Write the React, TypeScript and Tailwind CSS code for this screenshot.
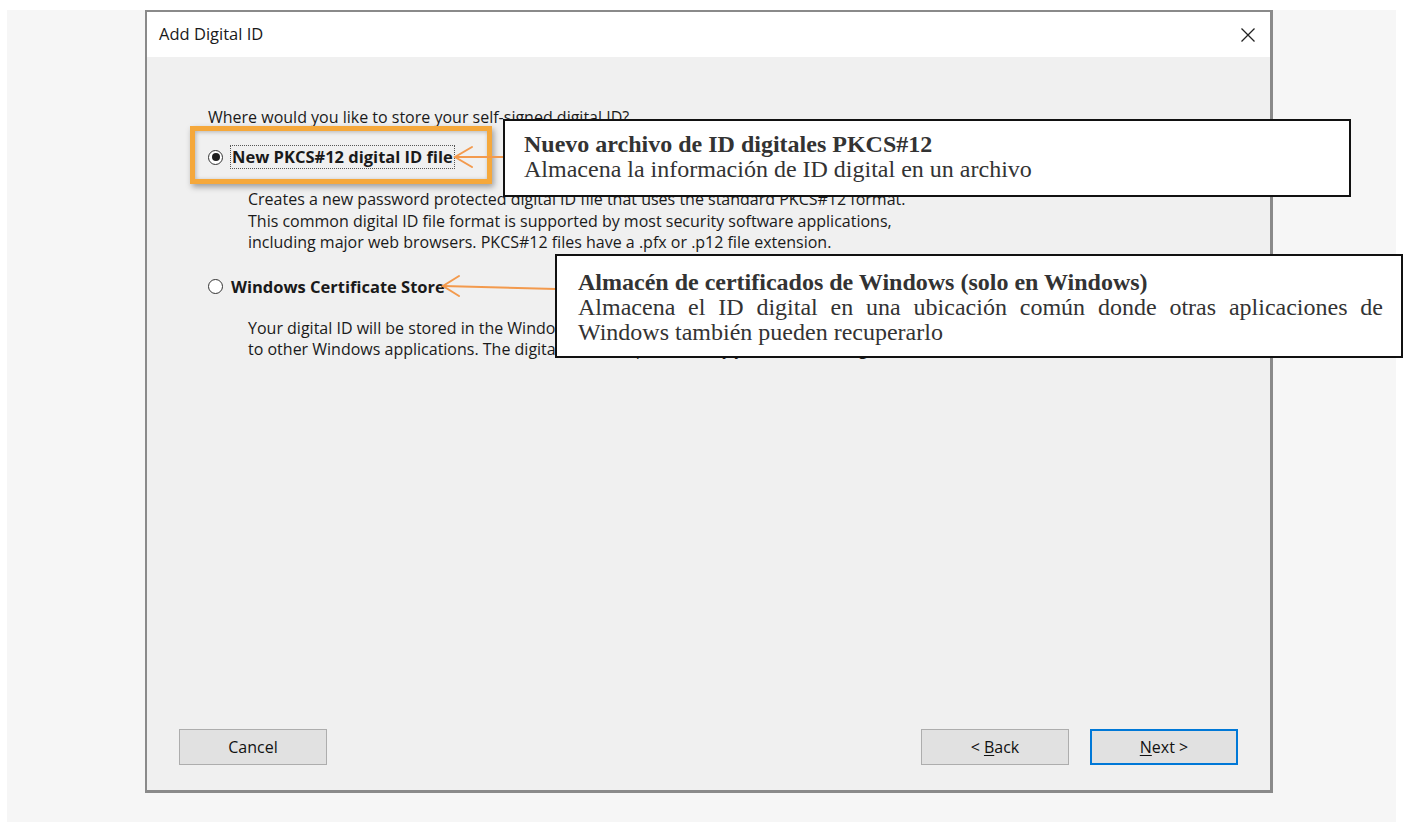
import React from "react";

const ui = { fontFamily: '"Open Sans", "Noto Sans", sans-serif' };
const serif = { fontFamily: '"Liberation Serif", "Times New Roman", serif' };

function Radio({ checked }: { checked?: boolean }) {
  return (
    <span className="flex h-[15px] w-[15px] shrink-0 items-center justify-center rounded-full border border-[#333] bg-white">
      {checked && <span className="h-[8px] w-[8px] rounded-full bg-[#1f1f1f]" />}
    </span>
  );
}

function Button({ children, primary }: { children: React.ReactNode; primary?: boolean }) {
  return (
    <button
      className={
        primary
          ? "flex h-[36px] w-[148px] items-center justify-center border-2 border-[#0078d7] bg-[#e1e1e1] text-[16px] text-[#111]"
          : "flex h-[36px] w-[148px] items-center justify-center border border-[#adadad] bg-[#e1e1e1] text-[16px] text-[#111]"
      }
      style={ui}
    >
      {children}
    </button>
  );
}

export default function App() {
  return (
    <div className="relative h-[822px] w-[1403px] overflow-hidden bg-white">
      <div className="ml-[7px] mt-[10px] h-[812px] w-[1389px] bg-[#f6f6f6] pl-[138px]">
        {/* dialog window */}
        <div className="flex h-[783px] w-[1128px] flex-col border-l-2 border-t-2 border-r-[3px] border-b-[3px] border-[#8a8a8a] bg-[#f0f0f0]" style={ui}>
          <div className="flex h-[45px] shrink-0 items-center justify-between bg-white pl-[12px] pr-[14px]">
            <span className="text-[16.5px] text-[#1a1a1a]">Add Digital ID</span>
            <svg width="16" height="16" viewBox="0 0 16 16" className="text-[#222]">
              <path d="M1.5 1.5 L14.5 14.5 M14.5 1.5 L1.5 14.5" stroke="currentColor" strokeWidth="1.3" fill="none" />
            </svg>
          </div>
          <div className="flex flex-1 flex-col pl-[61px] pr-[32px] pt-[49px] text-[16px] text-[#1a1a1a]">
            <p className="leading-[22px]">Where would you like to store your self-signed digital ID?</p>
            <div className="mt-[17px] flex h-[24px] items-center gap-[7px]">
              <Radio checked />
              <span className="border border-dotted border-[#555] px-[1px] text-[16.5px] font-bold leading-[22px]">
                New PKCS#12 digital ID file
              </span>
            </div>
            <div className="mt-[20px] pl-[40px] leading-[21.5px]">
              <p>Creates a new password protected digital ID file that uses the standard PKCS#12 format.</p>
              <p>This common digital ID file format is supported by most security software applications,</p>
              <p>including major web browsers. PKCS#12 files have a .pfx or .p12 file extension.</p>
            </div>
            <div className="mt-[21px] flex h-[24px] items-center gap-[8px]">
              <Radio />
              <span className="text-[16.5px] font-bold leading-[22px]">Windows Certificate Store</span>
            </div>
            <div className="mt-[19px] pl-[40px] leading-[21.5px]">
              <p>Your digital ID will be stored in the Windows Certificate Store where it will also be available</p>
              <p>to other Windows applications. The digital ID will be protected by your Windows login.</p>
            </div>
            <div className="mt-auto mb-[25px] flex items-center">
              <div className="-ml-[29px]">
                <Button>Cancel</Button>
              </div>
              <div className="ml-auto flex gap-[21px]">
                <Button>
                  &lt; <span className="ml-[4px] underline underline-offset-2">B</span>ack
                </Button>
                <Button primary>
                  <span className="underline underline-offset-2">N</span>ext &gt;
                </Button>
              </div>
            </div>
          </div>
        </div>
      </div>

      {/* orange highlight around the first option */}
      <div className="absolute left-[190px] top-[126px] h-[58px] w-[302px] border-[5px] border-[#f5a83b] shadow-[2px_3px_6px_rgba(0,0,0,0.35),inset_1px_1px_4px_rgba(0,0,0,0.25)]" />

      {/* callout arrows */}
      <svg className="pointer-events-none absolute left-0 top-0" width="1403" height="822">
        <g stroke="#f39a4d" strokeWidth="2" fill="none" strokeLinecap="round">
          <path d="M455 157 L504 157" />
          <path d="M472 147 L455 157 L472 167" />
          <path d="M443 286 L556 289" />
          <path d="M459 276 L443 286 L459 296" />
        </g>
      </svg>

      {/* callout: PKCS#12 */}
      <div className="absolute left-[503px] top-[119px] h-[78px] w-[848px] border-2 border-[#111] bg-white pl-[19px] pt-[11px] text-[#333]" style={serif}>
        <p className="text-[24px] font-bold leading-[25px]">Nuevo archivo de ID digitales PKCS#12</p>
        <p className="text-[24px] leading-[25px]">Almacena la información de ID digital en un archivo</p>
      </div>

      {/* callout: Windows store */}
      <div className="absolute left-[555px] top-[254px] h-[104px] w-[848px] border-2 border-[#111] bg-white pl-[21px] pr-[18px] pt-[14px] text-[#333]" style={serif}>
        <p className="text-[24px] font-bold leading-[25px]">Almacén de certificados de Windows (solo en Windows)</p>
        <p className="text-justify text-[24px] leading-[25px]">
          Almacena el ID digital en una ubicación común donde otras aplicaciones de Windows también pueden recuperarlo
        </p>
      </div>
    </div>
  );
}
